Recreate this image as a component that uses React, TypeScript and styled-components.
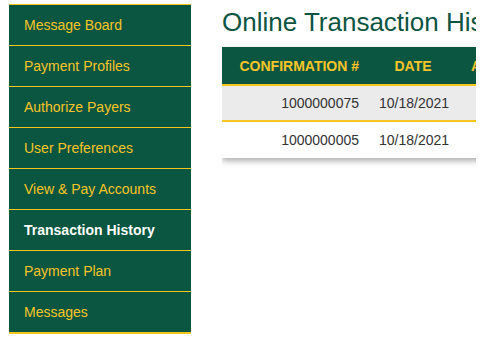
import styled, { createGlobalStyle } from 'styled-components'

const GlobalStyle = createGlobalStyle`
  html, body {
    margin: 0;
    padding: 0;
    background: #ffffff;
    font-family: 'Liberation Sans', Arial, sans-serif;
  }
`

const Page = styled.div`
  display: flex;
  align-items: flex-start;
  gap: 31px;
  padding: 4px 0 0 9px;
  width: 476px;
  box-sizing: border-box;
  height: 338px;
`

const Sidebar = styled.ul`
  list-style: none;
  margin: 0;
  padding: 0;
  width: 182px;
  flex: none;
  border-top: 1px solid #f3c41c;
  background-color: #0b5640;
`

const NavItem = styled.li<{ $active?: boolean }>`
  height: 40px;
  display: flex;
  align-items: center;
  padding-left: 15px;
  border-bottom: 1px solid #f3c41c;
  color: ${({ $active }) => ($active ? '#ffffff' : '#f6c428')};
  font-weight: ${({ $active }) => ($active ? 'bold' : 'normal')};
  font-size: 14px;

  &:last-child {
    border-bottom-width: 2px;
  }
`

const Main = styled.div`
  flex: 1;
  min-width: 0;
  overflow: hidden;
  padding: 3px 0 20px;
`

const Title = styled.h1`
  margin: 0;
  font-size: 26px;
  line-height: 30px;
  font-weight: normal;
  color: #0d5443;
  white-space: nowrap;
`

const TableWrap = styled.div`
  margin-top: 10px;
  width: 360px;
  box-shadow: 0 3px 6px rgba(0, 0, 0, 0.32);
`

const Table = styled.table`
  border-collapse: separate;
  border-spacing: 0;
  width: 100%;
  table-layout: fixed;
  font-size: 14px;
`

const HeadCell = styled.th<{ $align: string; $width?: number }>`
  height: 39px;
  padding: 0 10px;
  text-align: ${({ $align }) => $align};
  width: ${({ $width }) => ($width ? `${$width}px` : 'auto')};
  background-color: #0b5640;
  color: #f7c52a;
  font-weight: bold;
  white-space: nowrap;
  overflow: hidden;
  border-bottom: 2px solid #f5c518;
  box-sizing: border-box;
`

const Row = styled.tr<{ $shaded?: boolean }>`
  background-color: ${({ $shaded }) => ($shaded ? '#ebebeb' : '#ffffff')};
`

const Cell = styled.td<{ $align: string; $divider?: boolean }>`
  height: 36px;
  padding: 0 10px;
  text-align: ${({ $align }) => $align};
  color: #333333;
  white-space: nowrap;
  box-sizing: border-box;
  border-bottom: ${({ $divider }) => ($divider ? '2px solid #f7c623' : 'none')};
`

const navItems = [
  'Message Board',
  'Payment Profiles',
  'Authorize Payers',
  'User Preferences',
  'View & Pay Accounts',
  'Transaction History',
  'Payment Plan',
  'Messages',
]

const transactions = [
  { id: '1000000075', date: '10/18/2021', amount: '$25.00' },
  { id: '1000000005', date: '10/18/2021', amount: '$25.00' },
]

const App = () => {
  return (
    <>
      <GlobalStyle />
      <Page>
        <Sidebar>
          {navItems.map((item) => (
            <NavItem key={item} $active={item === 'Transaction History'}>
              {item}
            </NavItem>
          ))}
        </Sidebar>
        <Main>
          <Title>Online Transaction History</Title>
          <TableWrap>
            <Table>
              <thead>
                <tr>
                  <HeadCell $align='right' $width={147}>
                    CONFIRMATION #
                  </HeadCell>
                  <HeadCell $align='center' $width={88}>
                    DATE
                  </HeadCell>
                  <HeadCell $align='left' style={{ paddingLeft: 14 }}>
                    AMOUNT
                  </HeadCell>
                </tr>
              </thead>
              <tbody>
                {transactions.map((t, i) => {
                  const divider = i < transactions.length - 1
                  return (
                    <Row key={t.id} $shaded={i === 0}>
                      <Cell $align='right' $divider={divider}>{t.id}</Cell>
                      <Cell $align='center' $divider={divider}>{t.date}</Cell>
                      <Cell $align='center' $divider={divider}>{t.amount}</Cell>
                    </Row>
                  )
                })}
              </tbody>
            </Table>
          </TableWrap>
        </Main>
      </Page>
    </>
  )
}

export default App
